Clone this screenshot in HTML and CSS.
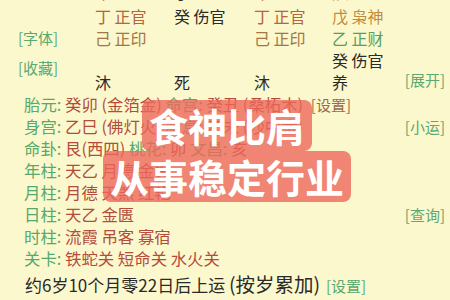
FILE: index.html
```html
<!DOCTYPE html>
<html lang="zh">
<head>
<meta charset="utf-8">
<link rel="stylesheet" href="styles.css">
</head>
<body>
<div class="page">
  <div class="top">
    <div class="side-left">
      <span class="btn">[字体]</span>
      <span class="btn">[收藏]</span>
    </div>
    <div class="pillars">
      <span class="big fire">午</span><span class="big dark">子</span><span class="big fire">午</span><span class="big earth">辰</span>
      <span class="ding">丁 正官</span><span class="dark">癸 伤官</span><span class="ding">丁 正官</span><span class="earth">戊 枭神</span>
      <span class="ji">己 正印</span><span></span><span class="ji">己 正印</span><span class="wood">乙 正财</span>
      <span></span><span></span><span></span><span class="dark">癸 伤官</span>
      <span class="dark">沐</span><span class="dark">死</span><span class="dark">沐</span><span class="dark">养</span>
    </div>
    <div class="side-right">
      <span class="btn">[展开]</span>
    </div>
  </div>

  <div class="info">
    <div class="row">
      <span><span class="lb">胎元: </span><span class="val">癸卯 (金箔金)</span> <span class="lb">命宫: </span><span class="val">癸丑 (桑柘木)</span> <span class="btn brown">[设置]</span></span>
    </div>
    <div class="row">
      <span><span class="lb">身宫: </span><span class="val">乙巳 (佛灯火)</span> <span class="lb">胎息: </span><span class="val">乙未 (沙中金)</span></span>
      <span class="btn">[小运]</span>
    </div>
    <div class="row">
      <span><span class="lb">命卦: </span><span class="val">艮(西四)</span> <span class="lb">桃花: </span><span class="val">卯</span> <span class="lb">文昌: </span><span class="val">亥</span></span>
    </div>
    <div class="row">
      <span><span class="lb">年柱: </span><span class="val">天乙 月德 金舆</span></span>
    </div>
    <div class="row">
      <span><span class="lb">月柱: </span><span class="val">月德 天煞 红艳</span></span>
    </div>
    <div class="row">
      <span><span class="lb">日柱: </span><span class="val">天乙 金匮</span></span>
      <span class="btn">[查询]</span>
    </div>
    <div class="row">
      <span><span class="lb">时柱: </span><span class="val">流霞 吊客 寡宿</span></span>
    </div>
    <div class="row">
      <span><span class="lb">关卡: </span><span class="val">铁蛇关 短命关 水火关</span></span>
    </div>
  </div>

  <div class="qiyun">约6岁10个月零22日后上运 <span class="paren">(按岁累加)</span> <span class="btn">[设置]</span></div>

  <div class="overlay">
    <div class="hl">食神比肩</div>
    <div class="hl">从事稳定行业</div>
  </div>
</div>
</body>
</html>
```
FILE: styles.css
```css
html, body {
  margin: 0;
  padding: 0;
  background: #fcf8cd;
}
body {
  width: 450px;
  height: 300px;
  overflow: hidden;
  font-family: "Noto Sans CJK SC", "Noto Sans", sans-serif;
  font-size: 16px;
  line-height: 22px;
  color: #2a2a2a;
}
.page {
  position: relative;
  display: flow-root;
  height: 300px;
}
.top {
  display: flex;
  margin-top: -15px;
  padding: 0 5px 0 18px;
}
.side-left {
  width: 77px;
  display: flex;
  flex-direction: column;
  align-items: flex-start;
  padding-top: 42px;
  gap: 8px;
}
.btn {
  font-size: 15px;
  color: #5aa872;
  white-space: nowrap;
}
.btn.brown {
  color: #9a6a4e;
  margin-left: 4px;
}
.pillars {
  flex: 1;
  display: grid;
  grid-template-columns: 79px 80px 78px 1fr;
  grid-template-rows: 20px repeat(4, 22px);
  white-space: nowrap;
}
.side-right {
  display: flex;
  flex-direction: column;
  justify-content: flex-end;
  padding-bottom: 2px;
}
.big {
  font-size: 17px;
  line-height: 14px;
}
.fire { color: #c0503c; }
.dark { color: #2a2a2a; }
.earth { color: #c38a3e; }
.ding { color: #b4643e; }
.ji { color: #a27646; }
.wood { color: #56a064; }

.info {
  padding: 0 5px 0 24px;
  font-size: 16.4px;
}
.row {
  display: flex;
  justify-content: space-between;
  align-items: baseline;
  height: 22px;
  white-space: nowrap;
}
.lb { color: #56a86c; }
.val { color: #b34c3a; }

.qiyun {
  padding: 0 0 0 25px;
  margin-top: 1px;
  font-size: 17px;
  line-height: 28px;
  color: #2a2a2a;
  white-space: nowrap;
}
.qiyun .paren {
  font-size: 19.5px;
}
.qiyun .btn {
  margin-left: 2px;
}

.overlay {
  position: absolute;
  top: 100px;
  left: 0;
  right: 0;
  display: flex;
  flex-direction: column;
  align-items: center;
}
.hl {
  margin-left: 4px;
  font-size: 39px;
  line-height: 51px;
  font-weight: 700;
  color: #ffffff;
  background: rgba(236, 104, 92, 0.8);
  padding: 0 7px;
  border-radius: 8px;
  white-space: nowrap;
}
```
